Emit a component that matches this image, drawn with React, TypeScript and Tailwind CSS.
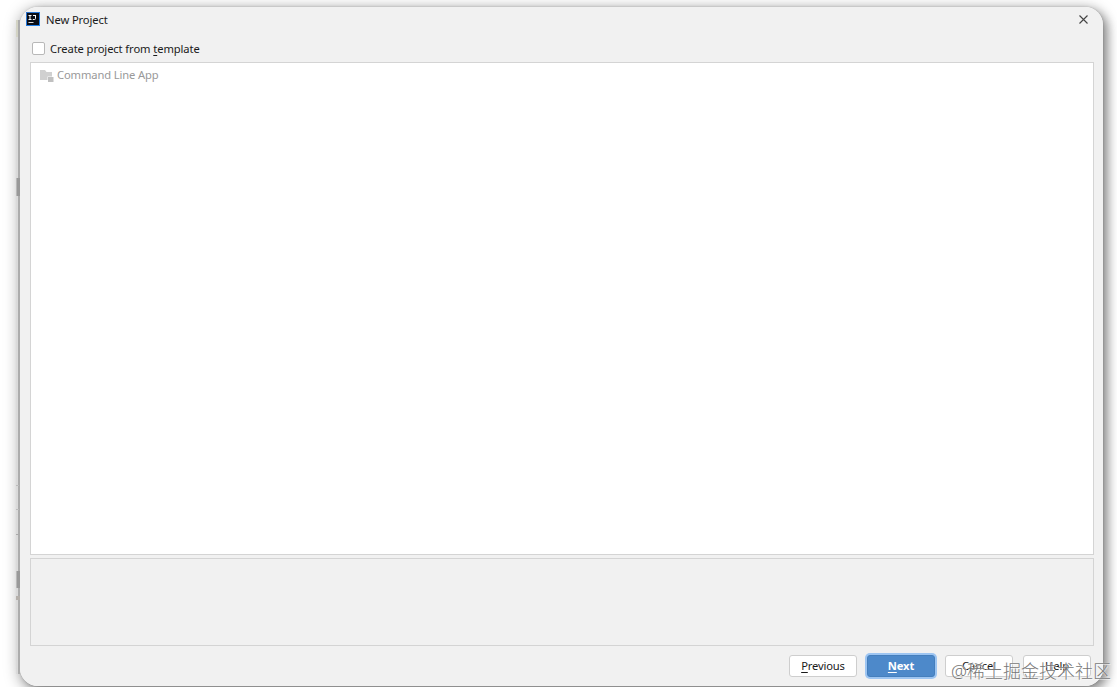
import type { ReactNode } from "react";

// ── Window chrome ─────────────────────────────────────────────────────────────

function AppLogo() {
  return (
    <svg width="14" height="14" viewBox="0 0 14 14" className="mt-[-2px] shrink-0">
      <defs>
        <linearGradient id="logoEdge" x1="0" y1="0" x2="1" y2="1">
          <stop offset="0" stopColor="#2f6fc4" />
          <stop offset="1" stopColor="#1b84f5" />
        </linearGradient>
      </defs>
      <rect width="14" height="14" fill="url(#logoEdge)" />
      <rect x="1" y="1" width="12" height="12" fill="#0a0e16" />
      <path d="M2.5 3.5h3M4 3v4M2.5 7.5h3M7 3.5h2.5M9.5 3v3.5q0 1-1 1H6.8" fill="none" stroke="#fff" strokeWidth="1" />
      <rect x="2.5" y="10" width="5" height="1" fill="#ddd" />
    </svg>
  );
}

function TitleBar() {
  return (
    <div className="flex h-[26px] items-center pl-[6px] pr-[15px]">
      <AppLogo />
      <span className="ml-[6px] text-[11.2px] leading-[14px] tracking-[-0.1px] text-[#1a1a1a]">New Project</span>
      <button className="ml-auto mt-[-1px]" aria-label="Close">
        <svg width="9" height="9" viewBox="0 0 9 9" className="block">
          <path d="M.5.5l8 8M8.5.5l-8 8" stroke="#444" strokeWidth="1.1" />
        </svg>
      </button>
    </div>
  );
}

function TemplateIcon() {
  return (
    <svg width="14" height="12" viewBox="0 0 14 12" className="mt-px shrink-0">
      <path d="M0 0h5l1.5 2H12v4.5H7.5V10H0z" fill="#d0d0d0" />
      <rect x="8" y="7" width="5.5" height="5" fill="#c0c0c0" />
    </svg>
  );
}

// ── Buttons ───────────────────────────────────────────────────────────────────

function Btn({ children, primary }: { children: ReactNode; primary?: boolean }) {
  const cls = primary
    ? "border-[#457fbd] bg-[#4d89ca] font-bold text-white shadow-[0_0_0_2px_#9dc5f2]"
    : "border-[#cecece] bg-white text-[#1a1a1a]";
  return (
    <button className={`flex h-[22px] w-[68px] items-center justify-center rounded-[3px] border text-[11.2px] leading-none tracking-[-0.15px] ${cls}`}>
      <span>{children}</span>
    </button>
  );
}

function U({ children }: { children: ReactNode }) {
  return <span className="underline underline-offset-[2px]">{children}</span>;
}

// Slivers of the window underneath that peek out along the left edge.
function EdgeMarks() {
  return (
    <div className="absolute left-[16px] top-[20px] h-[654px] w-[4px] bg-linear-to-r from-[#dadada] from-50% to-[#acacac] to-50%">
      <i className="absolute top-0 h-[17px] w-[2px] bg-[#d3d3c4]" />
      <i className="absolute top-[158px] h-[18px] w-full bg-linear-to-r from-[#b8b8b8] from-25% to-[#999] to-25%" />
      <i className="absolute top-[465px] h-px w-[3px] bg-[#bbb]" />
      <i className="absolute top-[489px] h-px w-[3px] bg-[#bbb]" />
      <i className="absolute top-[514px] h-px w-[3px] bg-[#aaa]" />
      <i className="absolute top-[551px] h-[17px] w-full bg-linear-to-r from-[#b8b8b8] from-25% to-[#999] to-25%" />
      <i className="absolute top-[576px] h-[4px] w-full bg-[#b5b0ab]" />
    </div>
  );
}

export default function App() {
  return (
    <div className="relative h-[687px] w-[1117px] overflow-hidden bg-white pl-[20px] pt-[7px] font-['Noto_Sans','Noto_Sans_CJK_SC',sans-serif]">
      <div className="absolute left-[20px] top-[7px] h-[679px] w-[1083px] rounded-[18px] shadow-[0_0_2px_rgba(0,0,0,0.2),0_3px_16px_rgba(0,0,0,0.4),5px_4px_10px_rgba(0,0,0,0.28)]" />
      <EdgeMarks />

      <div className="relative flex h-[679px] w-[1083px] flex-col rounded-[18px] bg-[#f1f1f1]">
        <TitleBar />

        <label className="flex h-[29px] items-center pl-[12px] pt-px">
          <span className="h-[13px] w-[13px] rounded-[2px] border border-[#b8b8b8] bg-white" />
          <span className="ml-[5px] mt-[2px] text-[11.2px] leading-[14px] tracking-[-0.1px] text-[#1a1a1a]">
            Create project from <U>t</U>emplate
          </span>
        </label>

        <div className="ml-[10px] h-[493px] w-[1064px] border border-[#d4d4d4] bg-white">
          <div className="flex h-[24px] items-center pl-[9px]">
            <TemplateIcon />
            <span className="ml-[3px] text-[11.2px] leading-[14px] tracking-[-0.13px] text-[#999]">Command Line App</span>
          </div>
        </div>

        <div className="ml-[10px] mt-[3px] h-[88px] w-[1064px] border border-[#d4d4d4]" />

        <div className="mr-[12px] mt-[9px] flex justify-end gap-[10px]">
          <Btn><U>P</U>revious</Btn>
          <Btn primary><U>N</U>ext</Btn>
          <Btn>Cancel</Btn>
          <Btn>Help</Btn>
        </div>
      </div>

      <div className="absolute left-[951px] top-[659px] whitespace-nowrap text-[18px] font-light leading-[24px] text-[#777] [text-shadow:0_0_1px_#fff,1px_1px_0_#fff8]">
        @稀土掘金技术社区
      </div>
    </div>
  );
}
